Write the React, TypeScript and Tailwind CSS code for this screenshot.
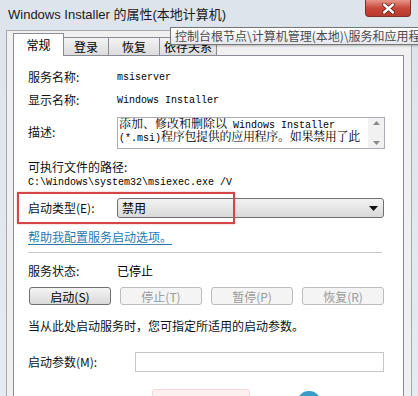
const sans = "font-['Noto_Sans_CJK_SC','Noto_Sans',sans-serif]";
const mono = "font-['Liberation_Mono','Noto_Sans_CJK_SC',monospace]";

const Tab = ({ label, width, active = false }: { label: string; width: string; active?: boolean }) =>
  active ? (
    <div className={`relative z-10 -mb-px flex h-[23px] items-center justify-center border border-b-0 border-[#898c95] bg-white text-[12px] text-black ${width}`}>
      {label}
    </div>
  ) : (
    <div className={`flex h-[18px] items-center justify-center border border-l-0 border-b-0 border-[#898c95] bg-gradient-to-b from-[#f3f3f3] to-[#dcdcdc] text-[12px] text-black ${width}`}>
      {label}
    </div>
  );

const Btn = ({ children, disabled = false }: { children: React.ReactNode; disabled?: boolean }) => (
  <button
    className={
      disabled
        ? "h-[18px] rounded-[3px] border border-[#b9bcc0] bg-[#f4f4f4] text-[12px] text-[#9a9a9a]"
        : "h-[18px] rounded-[3px] border border-[#707070] bg-gradient-to-b from-[#f4f4f4] to-[#dadada] text-[12px] text-black"
    }
  >
    {children}
  </button>
);

const Row = ({ label, children, className = "" }: { label: string; children?: React.ReactNode; className?: string }) => (
  <div className={`flex items-center ${className}`}>
    <div className="w-[89px] shrink-0 text-[12px] text-[#111]">{label}</div>
    {children}
  </div>
);

export default function App() {
  return (
    <div className={`relative h-[396px] w-[418px] overflow-hidden bg-gradient-to-b from-[#dde4ec] to-[#e6ebf1] ${sans}`}>
      {/* title bar */}
      <div className="flex h-[30px] items-center pl-[8px]">
        <span className="font-['Liberation_Sans','Noto_Sans_CJK_SC',sans-serif] text-[13px] text-[#1a1a1a]">
          Windows Installer 的属性(本地计算机)
        </span>
        <div className="ml-auto mr-[7px] flex h-[17px] w-[46px] items-center justify-center self-start rounded-b-[4px] border border-t-0 border-[#7d3127] bg-gradient-to-b from-[#e5958a] via-[#c8483a] to-[#b83a2c]">
          <svg width="13" height="11" viewBox="0 0 13 11">
            <path d="M2 1.5 L11 9.5 M11 1.5 L2 9.5" stroke="#5a1a14" strokeWidth="4" strokeLinecap="round" />
            <path d="M2 1.5 L11 9.5 M11 1.5 L2 9.5" stroke="#fff" strokeWidth="2.4" strokeLinecap="round" />
          </svg>
        </div>
      </div>

      {/* tooltip */}
      <div className="absolute left-[170px] top-[27px] z-20 h-[18px] w-[260px] overflow-hidden whitespace-nowrap border border-[#767676] bg-gradient-to-b from-white to-[#e6e7ee] pl-[4px] text-[12px] leading-[16px] text-[#4a4a4a] shadow-[1px_1px_2px_rgba(0,0,0,0.25)]">
        控制台根节点\计算机管理(本地)\服务和应用程序
      </div>

      {/* client area */}
      <div className="mx-[6px] h-[366px] border border-b-0 border-[#a6aab0] bg-[#f0f0f0] pl-[6px] pr-[7px] pt-[2px]">
        <div className="flex items-end">
          <Tab label="常规" width="w-[51px]" active />
          <Tab label="登录" width="w-[45px]" />
          <Tab label="恢复" width="w-[51px]" />
          <Tab label="依存关系" width="w-[57px]" />
        </div>

        <div className="relative h-[400px] border border-[#898c95] bg-white px-[14px]">
          <Row label="服务名称:" className="mt-[11px] h-[20px]">
            <span className={`${mono} text-[10px] text-black`}>msiserver</span>
          </Row>
          <Row label="显示名称:" className="mt-[3px] h-[20px]">
            <span className={`${mono} text-[10px] text-black`}>Windows Installer</span>
          </Row>

          <div className="mt-[7px] flex h-[32px] items-start">
            <div className="w-[89px] shrink-0 pt-[6px] text-[12px] text-[#111]">描述:</div>
            <div className="flex h-[32px] w-[268px] border border-[#a9acb4] bg-white">
              <div className="flex-1 overflow-hidden whitespace-nowrap pl-[1px] pt-[1px] font-['Liberation_Mono','Noto_Serif_CJK_SC','Noto_Sans_CJK_SC',monospace] text-[10px] leading-[13px] text-black">
                <div>
                  <span className="text-[12px]">添加、修改和删除以</span> Windows Installer
                </div>
                <div>
                  (*.msi)<span className="text-[12px] tracking-[-0.3px]">程序包提供的应用程序。如果禁用了此</span>
                </div>
              </div>
              <div className="flex w-[16px] flex-col items-center justify-between bg-[#f1f1f1] py-[3px]">
                <svg width="7" height="4" viewBox="0 0 7 4"><path d="M0 4 L3.5 0 L7 4Z" fill="#8a8a8a" /></svg>
                <svg width="7" height="4" viewBox="0 0 7 4"><path d="M0 0 L3.5 4 L7 0Z" fill="#8a8a8a" /></svg>
              </div>
            </div>
          </div>

          <div className="mt-[10px] flex h-[16px] items-center text-[12px] text-[#111]">可执行文件的路径:</div>
          <div className={`flex h-[14px] items-center ${mono} text-[10px] text-black`}>C:\Windows\system32\msiexec.exe /V</div>

          <div className="relative mt-[3px] flex h-[32px] items-center">
            <div className="absolute -left-[11px] top-0 h-[32px] w-[218px] border-2 border-[#d24646] shadow-[0_0_2px_rgba(210,70,70,0.4)]" />
            <div className="w-[89px] shrink-0 text-[12px] text-[#111]">启动类型(E):</div>
            <div className="flex h-[20px] w-[267px] items-center rounded-[3px] border border-[#707070] bg-gradient-to-b from-[#f3f3f3] to-[#d9d9d9] pl-[4px] pr-[5px] text-[12px] text-black">
              禁用
              <svg className="ml-auto" width="9" height="5" viewBox="0 0 9 5"><path d="M0 0 L9 0 L4.5 5Z" fill="#111" /></svg>
            </div>
          </div>

          <div className="mt-[5px] flex h-[16px] items-center">
            <span className="text-[12px] text-[#2a78ad] underline underline-offset-2">帮助我配置服务启动选项。</span>
          </div>

          <div className="mt-[7px] h-px w-[354px] bg-[#c9c9c9]" />

          <Row label="服务状态:" className="mt-[10px] h-[16px]">
            <span className="text-[12px] text-black">已停止</span>
          </Row>

          <div className="ml-[1px] mt-[8px] grid w-[355px] grid-cols-4 gap-[9px]">
            <Btn>启动(S)</Btn>
            <Btn disabled>停止(T)</Btn>
            <Btn disabled>暂停(P)</Btn>
            <Btn disabled>恢复(R)</Btn>
          </div>

          <div className="mt-[13px] flex h-[16px] items-center text-[12px] text-[#111]">
            当从此处启动服务时，您可指定所适用的启动参数。
          </div>

          <div className="mt-[18px] flex h-[20px] items-center">
            <div className="w-[107px] shrink-0 text-[12px] text-[#111]">启动参数(M):</div>
            <div className="h-[20px] w-[249px] border border-[#c4c6ca] bg-white" />
          </div>

          <div className="mt-[17px] flex items-start">
            <div className="ml-[124px] h-[20px] w-[98px] rounded-[3px] border border-[#f6d8d4] bg-[#fdf0ee]" />
            <div className="ml-[48px] mt-[2px] h-[20px] w-[22px] rounded-full bg-[#3a9bc8]" />
          </div>
        </div>
      </div>
    </div>
  );
}
